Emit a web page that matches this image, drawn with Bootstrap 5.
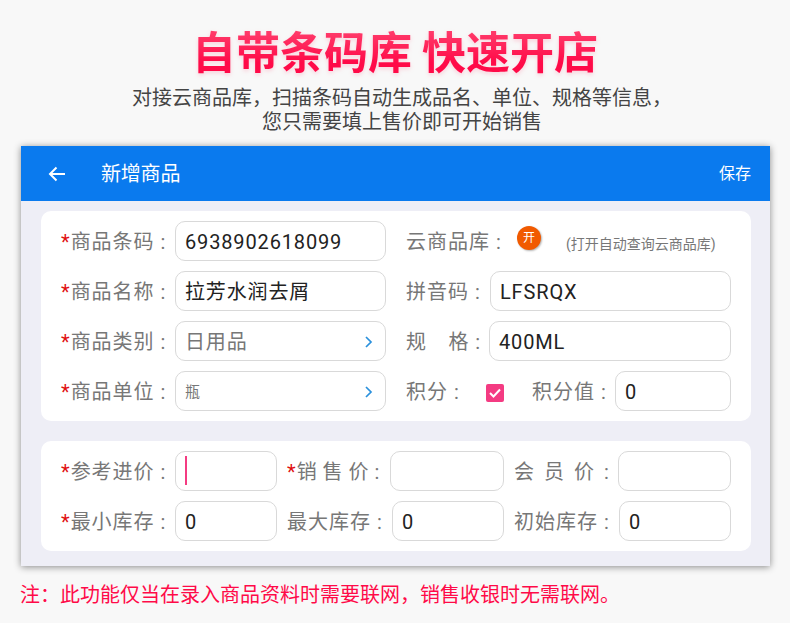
<!DOCTYPE html>
<html lang="zh">
<head>
<meta charset="utf-8">
<title>自带条码库 快速开店</title>
<link href="https://cdn.jsdelivr.net/npm/bootstrap@5.3.0/dist/css/bootstrap.min.css" rel="stylesheet">
<style>
html,body{height:623px;overflow:hidden}
body{background:#f8f8f8;font-family:Roboto,"Noto Sans CJK SC",sans-serif;font-size:20px}
.hero-title{margin:0;padding-top:22px;font-size:44px;line-height:56px;font-weight:700;font-family:"Noto Sans CJK SC",sans-serif;text-align:center;background:linear-gradient(180deg,#ff5a80 15%,#ff0a48 80%);-webkit-background-clip:text;background-clip:text;color:transparent;box-sizing:content-box;height:56px;filter:drop-shadow(0 2px 2px rgba(255,90,130,.25))}
.hero-sub{margin:8px 0 0;padding-left:14px;font-size:20px;line-height:24px;color:#444;text-align:center;height:49px}
.phone{margin:11px 20px 0 21px;height:420px;width:749px;background:#eeeef6;box-shadow:0 1px 7px rgba(0,0,0,.45)}
.phone-bar{height:55px;background:#0a7aee;color:#fff;padding:0 19px 0 27px}
.phone-bar svg{width:18px;height:16px;margin-right:35px}
.bar-name{font-size:20px;letter-spacing:-.2px}
.bar-save{font-size:16px}
.sheet{background:#fff;border-radius:10px;margin:0 19px 20px 20px;padding:10px 20px;display:grid;row-gap:10px}
.sheet-top{margin-top:10px;grid-template-columns:325px 325px;column-gap:20px}
.sheet-low{grid-template-columns:216px 217px 217px;column-gap:10px}
.fld{height:40px;display:flex;align-items:center;min-width:0}
.lab{flex:none;color:#777;letter-spacing:1px;word-spacing:0;white-space:nowrap;line-height:40px;padding-top:2px}
.lab b{color:#e01010;font-weight:400}
.lab.wide{word-spacing:3px}
.lab.tight{word-spacing:-1px}
.box{flex:1;min-width:0;height:40px;padding:2px 9px 0;border:1px solid #d9d9d9;border-radius:10px;color:#222;font-size:20px;letter-spacing:.85px;line-height:36px;display:flex;align-items:center;justify-content:space-between}
.box.dim{color:#777}
.box.tiny{font-size:15px;letter-spacing:0}
.w114{width:114px}.w84{width:84px}.w83{width:83px}.w103{width:103px}.w105{width:105px}.w104{width:104px}.w80{width:80px}.w111{width:111px}
.chev{width:9px;height:14px;flex:none;margin-right:3px}
.pill{width:24px;height:24px;border-radius:50%;background:#f15a00;color:#fff;font-size:12px;display:flex;align-items:center;justify-content:center;box-shadow:1px 1px 2px rgba(0,0,0,.3);margin:-6px 0 0 0;flex:none}
.hint{font-size:14px;color:#777;margin:6px 0 0 25px;white-space:nowrap}
.tick{width:18px;height:18px;border-radius:2px;background:#f43b82;flex:none;margin:3px 28px 0 0;display:flex;align-items:center;justify-content:center}
.tick svg{width:14px;height:12px}
.caret-line{width:2px;height:29px;background:#f43b82;flex:none;margin-top:-3px}
.notice{margin:18px 0 0 20px;color:#ff0a48;font-size:20px;line-height:20px;font-family:"Noto Sans CJK SC",sans-serif}
</style>
</head>
<body>
<h1 class="hero-title">自带条码库 快速开店</h1>
<p class="hero-sub">对接云商品库，扫描条码自动生成品名、单位、规格等信息，<br>您只需要填上售价即可开始销售</p>
<div class="phone">
  <div class="phone-bar d-flex align-items-center">
    <svg viewBox="0 0 18 16" fill="none" stroke="#fff" stroke-width="2"><path d="M17 8H2M8.500 1.500 2 8l6.500 6.500"/></svg>
    <span class="bar-name">新增商品</span>
    <span class="bar-save ms-auto">保存</span>
  </div>
  <div class="sheet sheet-top">
    <div class="fld"><span class="lab w114"><b>*</b>商品条码 :</span><div class="box">6938902618099</div></div>
    <div class="fld"><span class="lab w111">云商品库 :</span><span class="pill">开</span><span class="hint">(打开自动查询云商品库)</span></div>
    <div class="fld"><span class="lab w114"><b>*</b>商品名称 :</span><div class="box">拉芳水润去屑</div></div>
    <div class="fld"><span class="lab w84">拼音码 :</span><div class="box">LFSRQX</div></div>
    <div class="fld"><span class="lab w114"><b>*</b>商品类别 :</span><div class="box dim">日用品<svg class="chev" viewBox="0 0 9 14" fill="none" stroke="#2a90dc" stroke-width="1.700"><path d="M2 2l5 5-5 5"/></svg></div></div>
    <div class="fld"><span class="lab w83">规&emsp;格 :</span><div class="box">400ML</div></div>
    <div class="fld"><span class="lab w114"><b>*</b>商品单位 :</span><div class="box dim tiny">瓶<svg class="chev" viewBox="0 0 9 14" fill="none" stroke="#2a90dc" stroke-width="1.700"><path d="M2 2l5 5-5 5"/></svg></div></div>
    <div class="fld"><span class="lab w80">积分 :</span><span class="tick"><svg viewBox="0 0 14 12" fill="none" stroke="#fff" stroke-width="2"><path d="M2 6l3.500 3.500L12 2.500"/></svg></span><span class="lab w83">积分值 :</span><div class="box">0</div></div>
  </div>
  <div class="sheet sheet-low">
    <div class="fld"><span class="lab w114"><b>*</b>参考进价 :</span><div class="box"><span class="caret-line"></span></div></div>
    <div class="fld"><span class="lab tight w103"><b>*</b>销 售 价 :</span><div class="box"></div></div>
    <div class="fld"><span class="lab wide w104">会 员 价 :</span><div class="box"></div></div>
    <div class="fld"><span class="lab w114"><b>*</b>最小库存 :</span><div class="box">0</div></div>
    <div class="fld"><span class="lab w105">最大库存 :</span><div class="box">0</div></div>
    <div class="fld"><span class="lab w105">初始库存 :</span><div class="box">0</div></div>
  </div>
</div>
<p class="notice">注：此功能仅当在录入商品资料时需要联网，销售收银时无需联网。</p>
</body>
</html>
